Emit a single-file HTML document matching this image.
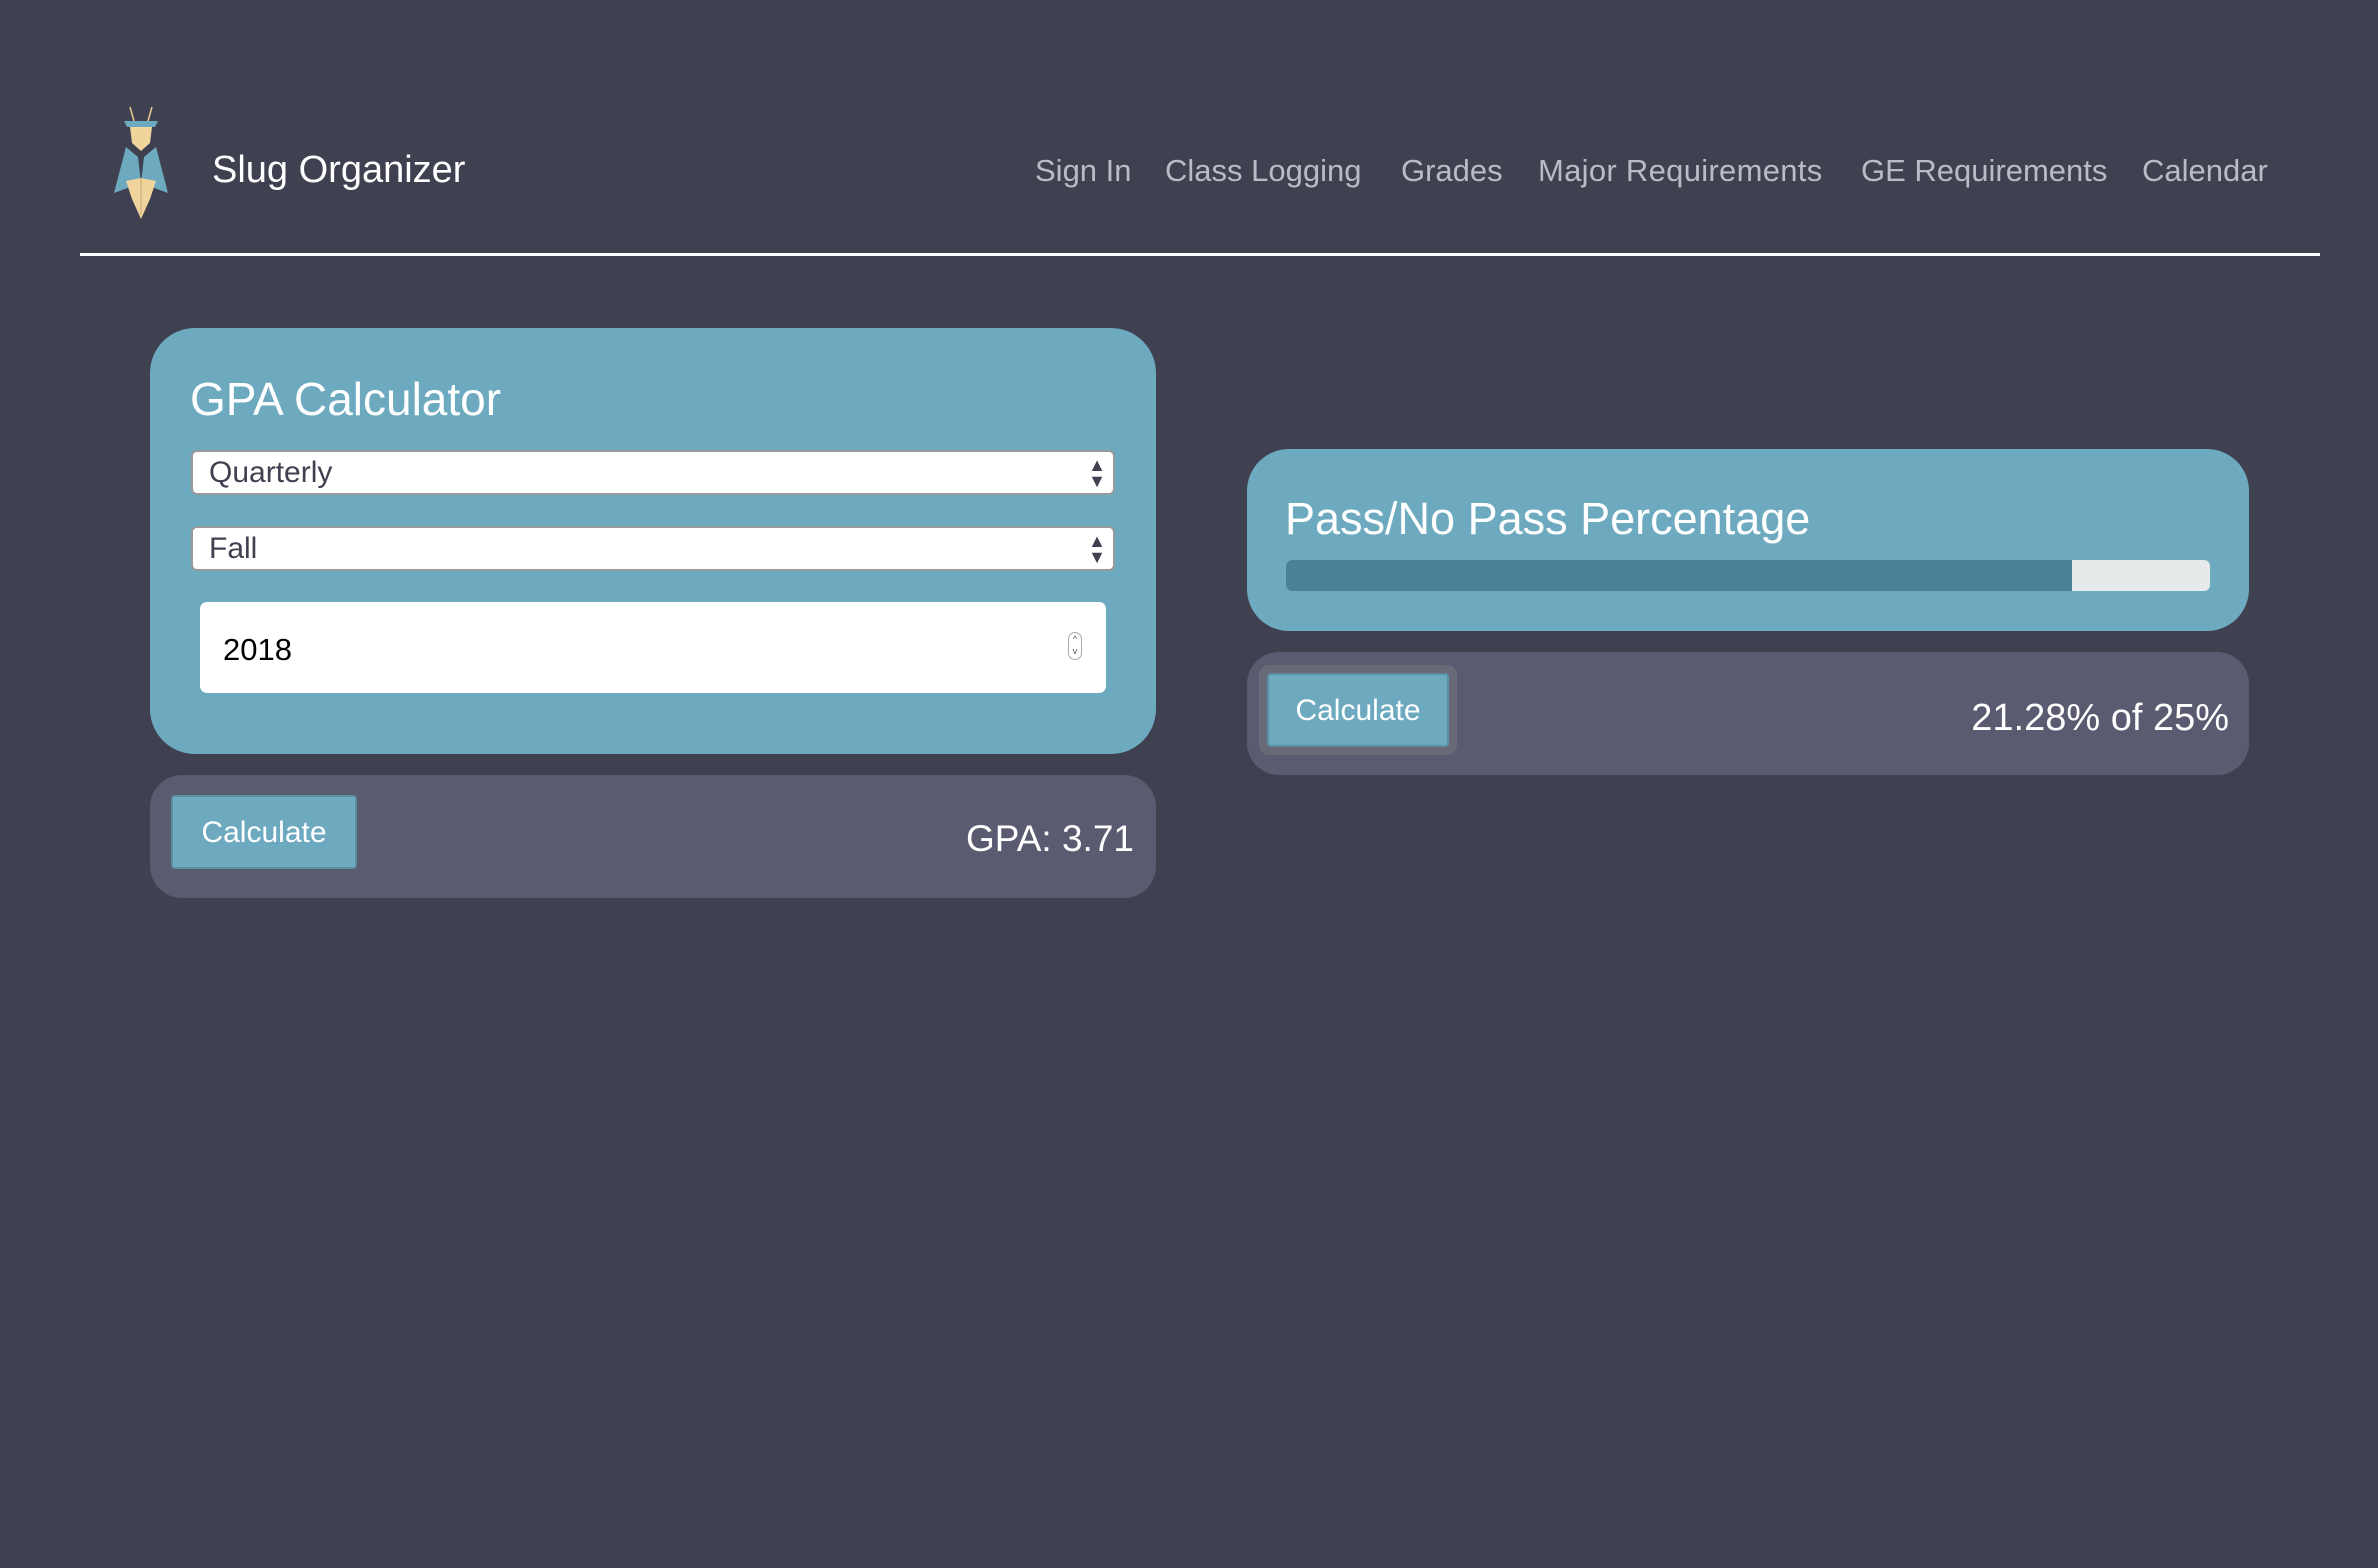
<!DOCTYPE html>
<html><head><style>
*{margin:0;padding:0;box-sizing:border-box}
body{width:2378px;height:1568px;background:#3f4050;font-family:"Liberation Sans",sans-serif;position:relative;overflow:hidden;color:#fff}
.a{position:absolute}
.nav{font-size:31px;color:#b9bbc6;top:153px;white-space:nowrap}
.card{background:#6daabf}
.res{background:#5a5a70}
.sel{background:#fff;border:2px solid #999;border-radius:6px;font-size:30px;color:#3f4050;padding-left:16px;line-height:42px}
.btn{background:#6daabf;border:2px solid #5a8fa3;border-radius:4px;font-size:30px;text-align:center;color:#fff}
.arr{position:absolute;right:7px;top:5px;font-size:18px;line-height:16px;color:#3f4050}
</style></head><body>
<svg class="a" style="left:108px;top:103px" width="66" height="116" viewBox="0 0 66 116">
<line x1="22" y1="4" x2="26" y2="18" stroke="#e8c990" stroke-width="1.5"/>
<line x1="44" y1="4" x2="40" y2="18" stroke="#e8c990" stroke-width="1.5"/>
<path d="M16 18 L50 18 L47 24 L19 24Z" fill="#6daabf"/>
<path d="M22 24 L44 24 L42 40 L33 48 L24 40Z" fill="#f0d49c"/>
<path d="M20 40 L33 48 L46 40 L56 45 L43 56 L33 58 L23 56 L10 45Z" fill="#3f4050"/>
<path d="M18 44 L30 54 L33 80 L6 90Z" fill="#6daabf"/>
<path d="M48 44 L36 54 L33 80 L60 90Z" fill="#6daabf"/>
<path d="M18 78 L33 75 L48 78 L42 96 L33 116 L24 96Z" fill="#f0d49c"/>
<line x1="33" y1="75" x2="33" y2="112" stroke="#c9ad7a" stroke-width="1"/>
</svg>
<div class="a" style="left:212px;top:149px;font-size:38px;color:#fff">Slug Organizer</div>
<div class="a nav" style="left:1035px">Sign In</div>
<div class="a nav" style="left:1165px">Class Logging</div>
<div class="a nav" style="left:1401px">Grades</div>
<div class="a nav" style="left:1538px;letter-spacing:0.3px">Major Requirements</div>
<div class="a nav" style="left:1861px">GE Requirements</div>
<div class="a nav" style="left:2142px">Calendar</div>
<div class="a" style="left:80px;top:253px;width:2240px;height:3px;background:#fff"></div>

<div class="a card" style="left:150px;top:328px;width:1006px;height:426px;border-radius:45px"></div>
<div class="a" style="left:190px;top:372px;font-size:46px">GPA Calculator</div>
<div class="a sel" style="left:191px;top:450px;width:924px;height:45px">Quarterly<div class="arr">▲<br>▼</div></div>
<div class="a sel" style="left:191px;top:526px;width:924px;height:45px">Fall<div class="arr">▲<br>▼</div></div>
<div class="a" style="left:200px;top:602px;width:906px;height:91px;background:#fff;border-radius:7px;color:#000;font-size:31px;padding:30px 0 0 23px">2018<div class="a" style="right:24px;top:30px;width:14px;height:28px;border:1px solid #aaa;border-radius:7px;font-size:9px;line-height:12px;text-align:center;color:#555">^<br>v</div></div>
<div class="a res" style="left:150px;top:775px;width:1006px;height:123px;border-radius:32px"></div>
<div class="a btn" style="left:171px;top:795px;width:186px;height:74px;line-height:72px">Calculate</div>
<div class="a" style="right:1244px;top:818px;font-size:37px">GPA: 3.71</div>

<div class="a card" style="left:1247px;top:449px;width:1002px;height:182px;border-radius:42px"></div>
<div class="a" style="left:1285px;top:493px;font-size:45px">Pass/No Pass Percentage</div>
<div class="a" style="left:1286px;top:560px;width:924px;height:31px;background:#e7eaeb;border-radius:6px;overflow:hidden"><div style="width:786px;height:31px;background:#4b8198"></div></div>
<div class="a res" style="left:1247px;top:652px;width:1002px;height:123px;border-radius:32px"></div>
<div class="a" style="left:1259px;top:665px;width:198px;height:90px;background:#686a78;border-radius:10px"></div>
<div class="a btn" style="left:1267px;top:673px;width:182px;height:74px;line-height:72px">Calculate</div>
<div class="a" style="right:149px;top:697px;font-size:38px">21.28% of 25%</div>
</body></html>
